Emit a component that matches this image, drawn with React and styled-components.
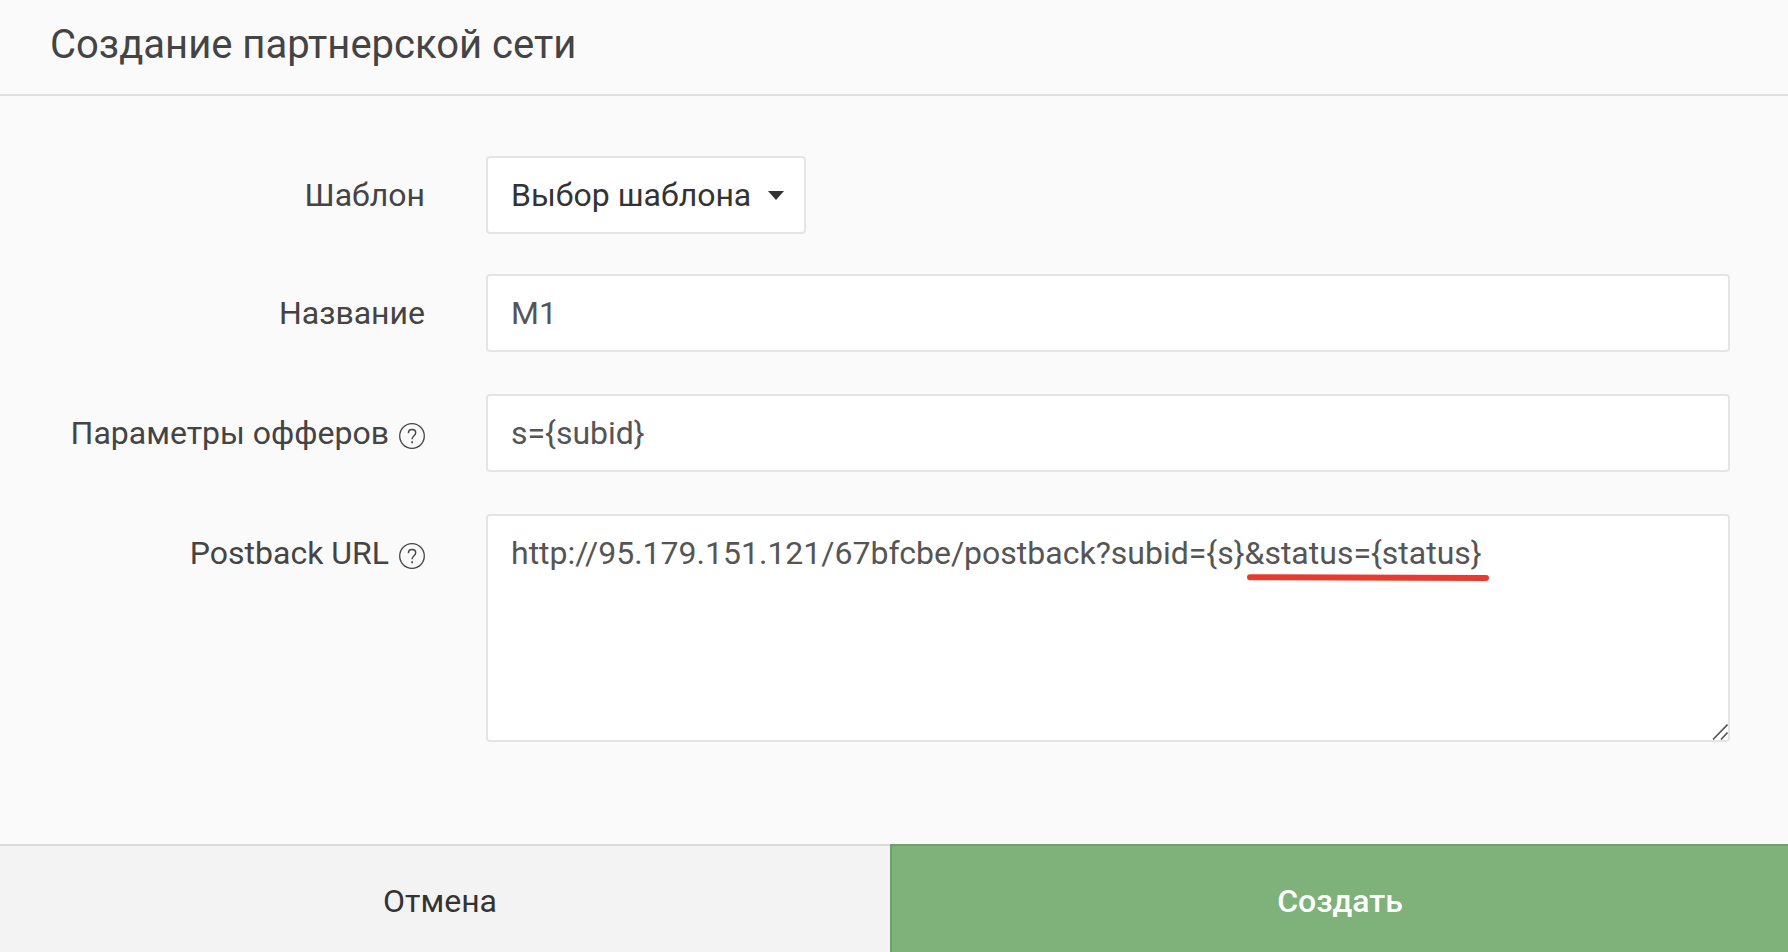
import React, { useState } from 'react'
import styled, { createGlobalStyle } from 'styled-components'

const GlobalStyle = createGlobalStyle`
  * {
    box-sizing: border-box;
  }

  body {
    margin: 0;
    background: #fafafa;
    color: #444;
    font-family: Roboto, "Liberation Sans", sans-serif;
    font-size: 32px;
    line-height: 40px;
  }
`

const Form = styled.form`
  display: flex;
  flex-direction: column;
  min-height: 100vh;
`

const Header = styled.header`
  padding: 21px 50px 25px;
  border-bottom: 2px solid #e0e0e0;
`

const Title = styled.h1`
  margin: 0;
  font-size: 40px;
  font-weight: 400;
  line-height: 48px;
`

const Fields = styled.div`
  flex: 1;
  padding: 60px 58px 60px 50px;
`

const Row = styled.div`
  display: grid;
  grid-template-columns: 375px 1fr;
  column-gap: 61px;
  align-items: start;
  margin-bottom: ${({ $tight }) => $tight ? '40px' : '42px'};
`

const LabelBox = styled.div`
  display: flex;
  justify-content: flex-end;
  align-items: center;
  gap: 10px;
  padding: 19px 0;
`

const HelpIcon = styled.svg`
  width: 26px;
  height: 26px;
  margin-top: 6px;
  fill: none;
  stroke: #444;
`

const Control = styled.div`
  position: relative;
`

const fieldStyle = `
  display: block;
  margin: 0;
  padding: 17px 23px;
  border: 2px solid #e5e5e5;
  border-radius: 4px;
  background: #fff;
  font: inherit;
  outline: none;
`

const Input = styled.input`
  ${fieldStyle}
  width: 100%;
  height: 78px;
  color: #555;
`

const TextArea = styled.textarea`
  ${fieldStyle}
  width: 100%;
  height: 228px;
  color: #555;
  resize: none;
`

const SelectBox = styled.div`
  position: relative;
  width: fit-content;

  &::after {
    content: '';
    position: absolute;
    top: 35px;
    right: 22px;
    border-top: 9px solid #333;
    border-left: 8px solid transparent;
    border-right: 8px solid transparent;
    pointer-events: none;
  }
`

const Select = styled.select`
  ${fieldStyle}
  appearance: none;
  height: 78px;
  padding-right: 52px;
  color: #333;
`

const Underline = styled.svg`
  position: absolute;
  top: 60px;
  left: 761px;
  width: 242px;
  height: 8px;
  pointer-events: none;
`

const Grip = styled.svg`
  position: absolute;
  right: 2px;
  bottom: 2px;
  width: 16px;
  height: 16px;
  pointer-events: none;
`

const Footer = styled.footer`
  display: grid;
  grid-template-columns: 890fr 898fr;
`

const Button = styled.button`
  height: 108px;
  padding: 4px 10px 0 0;
  border: 0 solid #dadada;
  border-top-width: 2px;
  background: #f3f3f3;
  color: #333;
  font: inherit;
  cursor: pointer;
`

const PrimaryButton = styled(Button)`
  padding-right: 0;
  border-left-width: 2px;
  border-color: #70a16b;
  background: #7fb17a;
  color: #fff;
  font-weight: 500;
`

const Help = () =>
  <HelpIcon viewBox="0 0 26 26" aria-hidden="true">
    <circle cx="13" cy="13" r="12.3" strokeWidth="1.3" />
    <path d="M9.4 10.2c0-2.3 1.5-3.7 3.7-3.7s3.6 1.3 3.6 3.3c0 1.5-.8 2.3-1.9 3.2-1.2 1-1.7 1.6-1.7 3.2" strokeWidth="1.4" />
    <path d="M13.1 18.2v2" strokeWidth="1.7" />
  </HelpIcon>

const Field = ({ id, label, help, tight, children }) =>
  <Row $tight={tight}>
    <LabelBox>
      <label htmlFor={id}>{label}</label>
      {help && <Help />}
    </LabelBox>
    <Control>{children}</Control>
  </Row>

const App = () => {
  const [name, setName] = useState('M1')
  const [params, setParams] = useState('s={subid}')
  const [postback, setPostback] = useState('http://95.179.151.121/67bfcbe/postback?subid={s}&status={status}')

  return (
    <Form onSubmit={e => e.preventDefault()}>
      <GlobalStyle />
      <Header>
        <Title>Создание партнерской сети</Title>
      </Header>
      <Fields>
        <Field id="template" label="Шаблон" tight>
          <SelectBox>
            <Select id="template">
              <option>Выбор шаблона</option>
            </Select>
          </SelectBox>
        </Field>
        <Field id="name" label="Название">
          <Input id="name" type="text" value={name} onChange={e => setName(e.target.value)} />
        </Field>
        <Field id="params" label="Параметры офферов" help>
          <Input id="params" type="text" value={params} onChange={e => setParams(e.target.value)} />
        </Field>
        <Field id="postback" label="Postback URL" help>
          <TextArea
            id="postback"
            spellCheck={false}
            value={postback}
            onChange={e => setPostback(e.target.value)}
          />
          <Underline viewBox="0 0 242 8" aria-hidden="true">
            <path d="M3 3.3L239 3.9" stroke="#e63b2e" strokeWidth="6" strokeLinecap="round" />
          </Underline>
          <Grip viewBox="0 0 16 16" aria-hidden="true">
            <path d="M1 15.5L15.5 0.5M9 15.5L15.5 8.5" stroke="#555" strokeWidth="1.6" />
          </Grip>
        </Field>
      </Fields>
      <Footer>
        <Button type="button">Отмена</Button>
        <PrimaryButton type="submit">Создать</PrimaryButton>
      </Footer>
    </Form>
  )
}

export default App
